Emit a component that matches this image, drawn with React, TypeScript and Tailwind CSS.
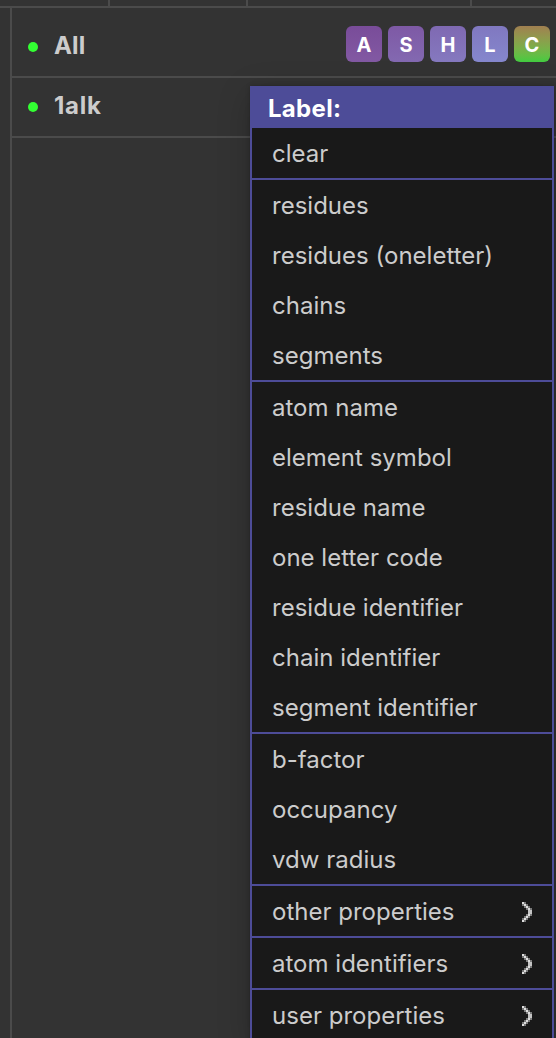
import React from "react";

type Item = { text: string; submenu?: boolean };

const groups: Item[][] = [
  [{ text: "clear" }],
  [{ text: "residues" }, { text: "residues (oneletter)" }, { text: "chains" }, { text: "segments" }],
  [
    { text: "atom name" },
    { text: "element symbol" },
    { text: "residue name" },
    { text: "one letter code" },
    { text: "residue identifier" },
    { text: "chain identifier" },
    { text: "segment identifier" },
  ],
  [{ text: "b-factor" }, { text: "occupancy" }, { text: "vdw radius" }],
  [{ text: "other properties", submenu: true }],
  [{ text: "atom identifiers", submenu: true }],
  [{ text: "user properties", submenu: true }],
];

const buttons = [
  { letter: "A", color: "from-[#794c99] to-[#8259a3]" },
  { letter: "S", color: "from-[#7e59a5] to-[#8369b1]" },
  { letter: "H", color: "from-[#7f69b2] to-[#8579bf]" },
  { letter: "L", color: "from-[#8078c0] to-[#8587cd]" },
  { letter: "C", color: "from-[#a07f50] to-[#40cc40]" },
];

function Chevron() {
  return (
    <svg width="10" height="20" viewBox="0 0 10 20" shapeRendering="crispEdges">
      <path
        fill="#dedede"
        d="M0 0h2v2h-2zM2 2h2v2h-2zM4 4h2v2h-2zM6 6h2v2h-2zM6 12h2v2h-2zM4 14h2v2h-2zM2 16h2v2h-2zM0 18h2v2h-2z"
      />
      <path fill="#c4c4c4" d="M6 8h4v4h-4z" />
      <path
        fill="#7a7a7a"
        d="M2 0h2v2h-2zM0 2h2v2h-2zM4 2h2v2h-2zM2 4h2v2h-2zM6 4h2v2h-2zM4 6h2v2h-2zM8 6h2v2h-2zM8 12h2v2h-2zM4 12h2v2h-2zM6 14h2v2h-2zM2 14h2v2h-2zM0 16h2v2h-2zM4 16h2v2h-2zM2 18h2v2h-2z"
      />
    </svg>
  );
}

function ObjectRow({ name, children }: { name: React.ReactNode; children?: React.ReactNode }) {
  return (
    <div className="flex h-[60px] items-center border-b-2 border-[#4b4b4b] pr-1.5 pb-0.5 pl-4">
      <span className="mt-0.5 h-2.5 w-2.5 rounded-full bg-[#33ff33]" />
      <span className="ml-4 text-2xl font-bold text-[#cccccc]">{name}</span>
      {children}
    </div>
  );
}

export default function App() {
  return (
    <div className="relative h-[1038px] w-[556px] overflow-hidden bg-[#333333] font-['Inter',sans-serif]">
      <div className="flex h-2 border-b-2 border-[#4b4b4b]">
        <div className="w-[110px] border-r-2 border-[#4b4b4b]" />
        <div className="w-[138px] border-r-2 border-[#4b4b4b]" />
        <div className="w-[224px] border-r-2 border-[#4b4b4b]" />
      </div>
      <div className="ml-2.5 h-[1030px] border-l-2 border-[#4b4b4b] pt-2.5">
        <ObjectRow name={<span className="tracking-[0.2px]">All</span>}>
          <div className="mt-[-4px] ml-auto flex gap-1.5">
            {buttons.map((b) => (
              <div
                key={b.letter}
                className={`flex h-9 w-9 items-center justify-center rounded-md bg-linear-to-b pt-0.5 text-xl font-bold text-white ${b.color}`}
              >
                {b.letter}
              </div>
            ))}
          </div>
        </ObjectRow>
        <ObjectRow name={<span className="tracking-[0.7px]">1alk</span>} />
      </div>
      <div className="absolute top-[86px] left-[250px] w-[304px] border-x-2 border-[#4d4c98] bg-[#191919] shadow-[0_8px_32px_rgba(0,0,0,0.2),0_0_4px_rgba(0,0,0,0.25)]">
        <div className="flex h-[42px] items-center bg-[#4d4c98] pt-[3px] pl-4 text-2xl font-bold tracking-[0.3px] text-white">
          Label:
        </div>
        {groups.map((group, i) => (
          <div key={i} className="border-b-2 border-[#4d4c98]">
            {group.map((item) => (
              <div
                key={item.text}
                className="flex h-[50px] items-center justify-between px-5 pt-0.5 text-2xl tracking-[0.01px] whitespace-nowrap text-[#cccccc]"
              >
                <span>{item.text}</span>
                {item.submenu && <Chevron />}
              </div>
            ))}
          </div>
        ))}
      </div>
    </div>
  );
}
